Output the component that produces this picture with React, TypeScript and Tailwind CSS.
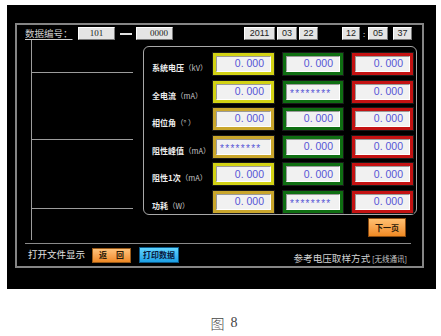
import React from "react";

type Cell = { v: string; tone: "yellow" | "gold" | "green" | "red" };

interface Row {
  label: string;
  unit: string;
  cells: Cell[];
}

const STARS = "********";
const ZERO = "0. 000";

const rows: Row[] = [
  { label: "系统电压", unit: "（kV）", cells: [{ v: ZERO, tone: "yellow" }, { v: ZERO, tone: "green" }, { v: ZERO, tone: "red" }] },
  { label: "全电流", unit: "（mA）", cells: [{ v: ZERO, tone: "yellow" }, { v: STARS, tone: "green" }, { v: ZERO, tone: "red" }] },
  { label: "相位角", unit: "（° ）", cells: [{ v: ZERO, tone: "gold" }, { v: ZERO, tone: "green" }, { v: ZERO, tone: "red" }] },
  { label: "阻性峰值", unit: "（mA）", cells: [{ v: STARS, tone: "gold" }, { v: ZERO, tone: "green" }, { v: ZERO, tone: "red" }] },
  { label: "阻性1次", unit: "（mA）", cells: [{ v: ZERO, tone: "yellow" }, { v: ZERO, tone: "green" }, { v: ZERO, tone: "red" }] },
  { label: "功耗", unit: "（W）", cells: [{ v: ZERO, tone: "gold" }, { v: STARS, tone: "green" }, { v: ZERO, tone: "red" }] },
];

const toneClass: Record<Cell["tone"], string> = {
  yellow: "border-[#d2d214] w-[61px]",
  gold: "border-[#c9a62c] w-[61px]",
  green: "border-[#0f6e12] w-[60px]",
  red: "border-[#c41212] w-[61px]",
};

const ValueBox = ({ cell }: { cell: Cell }) => {
  const stars = cell.v === STARS;
  return (
    <div
      className={`h-[22px] border-[3px] ${toneClass[cell.tone]} shadow-[0_0_0_1px_#1a1a1a]`}
    >
      <div
        className={`h-full flex items-center bg-[#f1f1f1] border border-t-[#9a9a9a] border-l-[#9a9a9a] border-b-white border-r-white text-[#5656d6] font-['Liberation_Sans',sans-serif] ${
          stars ? "justify-start pl-[3px] text-[10px] tracking-[1.3px]" : "justify-end pr-[6px] text-[10.5px]"
        }`}
      >
        <span className={stars ? "translate-y-[2px]" : ""}>{cell.v}</span>
      </div>
    </div>
  );
};

const HeadBox = ({ text, w, align = "center", serif = false }: { text: string; w: string; align?: "center" | "right"; serif?: boolean }) => (
  <div
    className={`${w} h-[13px] flex items-center bg-[#e4e4e4] border border-t-white border-l-white border-b-[#7a7a7a] border-r-[#7a7a7a] text-[9px] text-[#222] leading-none ${
      align === "right" ? "justify-end pr-[4px]" : "justify-center"
    } ${serif ? "font-['Liberation_Serif',serif]" : "font-['Liberation_Sans',sans-serif]"}`}
  >
    {text}
  </div>
);

const App = () => {
  return (
    <div className="w-[441px] h-[336px] bg-white flex flex-col font-['Noto_Sans_CJK_SC',sans-serif]">
      <div className="ml-[7px] mt-[5px] w-[429px] h-[284px] bg-black flex flex-col">
        <div className="ml-[8px] mt-[18px] w-[409px] h-[245px] border-2 border-[#858585] flex flex-col">
          {/* header */}
          <div className="mt-[2px] h-[13px] flex items-center">
            <div className="ml-[8px] w-[53px] text-[9.5px] leading-none text-[#cfcfcf] underline underline-offset-2 whitespace-nowrap">
              数据编号：
            </div>
            <HeadBox text="101" w="w-[37px]" serif />
            <div className="ml-[5px] w-[12px] h-[2px] bg-[#e0e0e0]" />
            <div className="ml-[4px]">
              <HeadBox text="0000" w="w-[37px]" align="right" serif />
            </div>
            <div className="ml-[71px] flex gap-[2px]">
              <HeadBox text="2011" w="w-[31px]" />
              <HeadBox text="03" w="w-[20px]" />
              <HeadBox text="22" w="w-[19px]" />
            </div>
            <div className="ml-[24px] flex items-center">
              <HeadBox text="12" w="w-[18px]" />
              <div className="w-[8px] text-center text-[8px] text-[#d0d0d0] leading-none">:</div>
              <HeadBox text="05" w="w-[20px]" />
              <div className="ml-[5px]">
                <HeadBox text="37" w="w-[19px]" />
              </div>
            </div>
          </div>

          {/* body */}
          <div className="h-[200px] flex">
            <div className="ml-[14px] w-[102px] h-full border-l border-[#9c9c9c] flex flex-col">
              <div className="h-[33px] border-b border-[#9c9c9c]" />
              <div className="h-[67px] border-b border-[#9c9c9c]" />
              <div className="h-[69px] border-b border-[#9c9c9c]" />
            </div>
            <div className="ml-[10px] w-[274px] flex flex-col">
              <div className="mt-[6px] h-[169px] border border-[#a8a8a8] rounded-md pt-[6px] pl-[8px] flex flex-col gap-[5.6px]">
                {rows.map((row) => (
                  <div key={row.label} className="flex items-center h-[22px]">
                    <div className="w-[61px] whitespace-nowrap leading-none text-[#ececec]">
                      <span className="text-[8px] font-bold">{row.label}</span>
                      <span className="text-[7.5px] text-[#c4c4c4]">{row.unit}</span>
                    </div>
                    <div className="flex gap-[9px]">
                      {row.cells.map((c, i) => (
                        <ValueBox key={i} cell={c} />
                      ))}
                    </div>
                  </div>
                ))}
              </div>
              <div className="mt-[3px] self-end mr-[11px] w-[38px] h-[19px] flex items-center justify-center bg-gradient-to-b from-[#ffc070] to-[#f08a20] border border-[#8a4a10] text-[8px] font-bold text-[#2a1a08] leading-none">
                下一页
              </div>
            </div>
          </div>

          {/* separator */}
          <div className="mt-[3px] ml-[8px] w-[386px] border-t border-[#8a8a8a]" />

          {/* bottom row */}
          <div className="h-[22px] flex items-center">
            <div className="ml-[11px] text-[9.5px] leading-none text-[#e0e0e0] whitespace-nowrap">打开文件显示</div>
            <div className="ml-[7px] w-[39px] h-[15px] flex items-center justify-center gap-[9px] bg-gradient-to-b from-[#ffc27a] to-[#f08a22] border border-[#9a5a18] text-[8px] font-bold text-[#2a1a08] leading-none">
              <span>返</span>
              <span>回</span>
            </div>
            <div className="ml-[8px] w-[40px] h-[16px] flex items-center justify-center bg-gradient-to-b from-[#5fd4ff] to-[#1aa0e6] border border-[#0a5a8a] text-[8px] font-bold text-[#0a1a40] leading-none">
              打印数据
            </div>
            <div className="ml-auto mr-[15px] whitespace-nowrap leading-none text-[#d4d4d4]">
              <span className="text-[9.6px]">参考电压取样方式</span>
              <span className="text-[7.5px] text-[#c8c8c8]"> [无线通讯]</span>
            </div>
          </div>
        </div>
      </div>
      <div className="mt-[27px] pl-[7px] flex justify-center items-center gap-[6px] text-[14px] leading-none text-[#444]">
        <span className="font-['Noto_Sans_CJK_SC',sans-serif] font-light">图</span>
        <span className="font-['Liberation_Serif',serif]">8</span>
      </div>
    </div>
  );
};

export default App;
